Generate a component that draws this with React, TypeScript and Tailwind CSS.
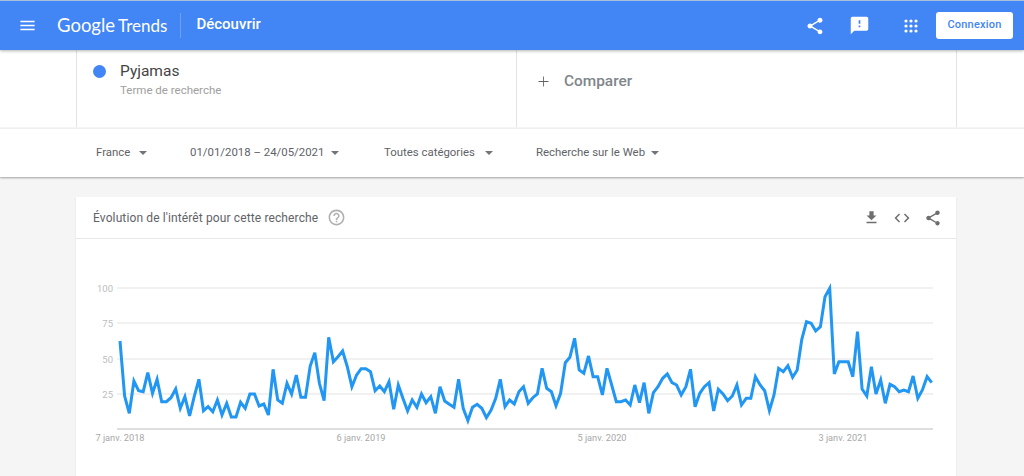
const font = { fontFamily: "Roboto, sans-serif" };

// traced weekly samples, in px*3 from the top of the plot crop
const samples = [
  213, 378, 430, 333, 362, 365, 308, 370, 328, 395, 395, 383, 357, 415, 380, 438, 380, 328, 422, 410, 425, 390,
  435, 400, 441, 441, 397, 415, 372, 372, 408, 402, 435, 298, 390, 400, 340, 372, 315,
  382, 382, 288, 248, 340, 392, 202, 275, 260, 243, 290, 350, 315, 296, 296, 305, 362, 348, 365, 335, 418, 345,
  385, 423, 390, 412, 372, 398, 380, 430, 350, 393, 403, 412, 328, 415, 452, 412, 403, 415, 443, 420, 385, 328,
  410, 390, 402, 365,
  350, 400, 383, 372, 295, 355, 365, 407, 370, 278, 262, 205, 300, 310, 258, 320, 320, 375, 295, 345, 395, 395,
  390, 405, 345, 398, 338, 430, 368, 350, 325, 312, 338, 345, 375, 350, 298, 410, 370, 350, 338, 423, 358, 372,
  392, 378, 345,
  405, 385, 385, 320, 345, 362, 422, 375, 295, 305, 287, 322, 300, 208, 155, 160, 183, 170, 80, 55, 312, 275, 275,
  275, 320, 185, 357, 378, 290, 372, 330, 400, 343, 350, 365, 360, 365, 318, 385, 360, 320, 338,
];

const step = 811.7 / (samples.length - 1);
const points = samples.map((v, i) => `${(44 + i * step).toFixed(1)},${(31 + v / 3).toFixed(1)}`).join(" ");

const yTicks = [
  { label: "100", y: 49 },
  { label: "75", y: 84 },
  { label: "50", y: 120 },
  { label: "25", y: 155 },
];

const xTicks = [
  { label: "7 janv. 2018", x: 44 },
  { label: "6 janv. 2019", x: 285 },
  { label: "5 janv. 2020", x: 526 },
  { label: "3 janv. 2021", x: 767 },
];

function Icon({ d, size, className }: { d: string; size: number; className: string }) {
  return (
    <svg width={size} height={size} viewBox="0 0 24 24" className={className} fill="currentColor">
      <path d={d} />
    </svg>
  );
}

const icons = {
  menu: "M3 18h18v-2H3v2zm0-5h18v-2H3v2zm0-7v2h18V6H3z",
  share:
    "M18 16.08c-.76 0-1.44.3-1.96.77L8.91 12.7c.05-.23.09-.46.09-.7s-.04-.47-.09-.7l7.05-4.11c.54.5 1.25.81 2.04.81 1.66 0 3-1.34 3-3s-1.34-3-3-3-3 1.34-3 3c0 .24.04.47.09.7L8.04 9.81C7.5 9.31 6.79 9 6 9c-1.66 0-3 1.34-3 3s1.34 3 3 3c.79 0 1.5-.31 2.04-.81l7.12 4.16c-.05.21-.08.43-.08.65 0 1.61 1.31 2.92 2.92 2.92 1.61 0 2.92-1.31 2.92-2.92s-1.31-2.92-2.92-2.92z",
  feedback: "M20 2H4c-1.1 0-1.99.9-1.99 2L2 22l4-4h14c1.1 0 2-.9 2-2V4c0-1.1-.9-2-2-2zm-7 12h-2v-2h2v2zm0-4h-2V6h2v4z",
  download: "M19 9h-4V3H9v6H5l7 7 7-7zM5 18v2h14v-2H5z",
  code: "M9.4 16.6L4.8 12l4.6-4.6L8 6l-6 6 6 6 1.4-1.4zm5.2 0l4.6-4.6-4.6-4.6L16 6l6 6-6 6-1.4-1.4z",
  help: "M11 18h2v-2h-2v2zm1-16C6.48 2 2 6.48 2 12s4.48 10 10 10 10-4.48 10-10S17.52 2 12 2zm0 18c-4.41 0-8-3.59-8-8s3.59-8 8-8 8 3.59 8 8-3.59 8-8 8zm0-14c-2.21 0-4 1.79-4 4h2c0-1.1.9-2 2-2s2 .9 2 2c0 2-3 1.75-3 5h2c0-2.25 3-2.5 3-5 0-2.21-1.79-4-4-4z",
  plus: "M19 12.6h-6.4V19h-1.2v-6.4H5v-1.2h6.4V5h1.2v6.4H19z",
};

// nine dots, the waffle of the Google apps button
function AppsIcon() {
  const dots = [2, 7, 12];
  return (
    <svg width="14" height="14" viewBox="0 0 14 14" className="ml-[34px] text-white" fill="currentColor">
      {dots.map((y) => dots.map((x) => <circle key={`${x}-${y}`} cx={x} cy={y} r="1.6" />))}
    </svg>
  );
}

function Filter({ label, className }: { label: string; className: string }) {
  return (
    <div className={`flex items-center justify-between text-[11.4px] text-[#5f6368] ${className}`}>
      <span>{label}</span>
      <span className="h-0 w-0 border-x-[4px] border-t-[4.5px] border-x-transparent border-t-[#70757a]" />
    </div>
  );
}

export default function App() {
  return (
    <div className="h-[476px] overflow-hidden bg-[#f5f5f5]" style={font}>
      <header className="relative z-10 flex h-[50px] items-center border-t border-[#a9bfe0] bg-[#4285f4] shadow-[0_1px_3px_rgba(0,0,0,0.3)]">
        <Icon d={icons.menu} size={19} className="ml-[18px] text-white" />
        <div className="ml-[20px] flex items-baseline text-white" style={{ fontFamily: "Lato, sans-serif" }}>
          <span className="text-[18.5px]">Google</span>
          <span className="ml-[3px] text-[17px]">Trends</span>
        </div>
        <div className="ml-[13px] h-[25px] w-px bg-[#6d9ff5]" />
        <span className="ml-[15px] pb-[2px] text-[15px] font-medium text-white">Découvrir</span>
        <Icon d={icons.share} size={20} className="ml-auto text-white" />
        <Icon d={icons.feedback} size={21} className="ml-[24px] text-white" />
        <AppsIcon />
        <button className="ml-[18px] mr-[11px] h-[27px] w-[77px] rounded-[3px] bg-white text-[11px] font-medium tracking-[0.2px] text-[#4285f4]">
          Connexion
        </button>
      </header>

      <section className="bg-white">
        <div className="ml-[76px] flex h-[77px] w-[881px] border-x border-[#e4e4e4]">
          <div className="flex w-[440px] border-r border-[#e4e4e4] pl-[16px] pt-[14px]">
            <span className="mt-[1px] h-[13px] w-[13px] rounded-full bg-[#4285f4]" />
            <div className="ml-[14px]">
              <div className="text-[15.5px] leading-[14px] text-[#444]">Pyjamas</div>
              <div className="mt-[5px] text-[11.5px] leading-[14px] text-[#a0a0a0]">Terme de recherche</div>
            </div>
          </div>
          <div className="flex items-center pb-[14px] pl-[18px]">
            <Icon d={icons.plus} size={17} className="text-[#616161]" />
            <span className="ml-[12px] text-[15.4px] font-medium text-[#80868b]">Comparer</span>
          </div>
        </div>
      </section>

      <section className="mt-[2px] flex h-[48px] items-center bg-white pl-[96px] shadow-[0_1px_2px_rgba(0,0,0,0.35)]">
        <Filter label="France" className="mr-[43px] w-[51px]" />
        <Filter label="01/01/2018 – 24/05/2021" className="mr-[45px] w-[149px]" />
        <Filter label="Toutes catégories" className="mr-[43px] w-[109px]" />
        <Filter label="Recherche sur le Web" className="w-[123px]" />
      </section>

      <section className="ml-[76px] mt-[20px] w-[880px] bg-white shadow-[0_1px_2px_rgba(0,0,0,0.08)]">
        <div className="flex h-[42px] items-center border-b border-[#e8e8e8] pl-[17px]">
          <span className="text-[12px] tracking-[0.12px] text-[#5f6368]">Évolution de l'intérêt pour cette recherche</span>
          <Icon d={icons.help} size={19} className="ml-[9px] text-[#b0b0b0]" />
          <Icon d={icons.download} size={17} className="ml-auto text-[#6e6e6e]" />
          <Icon d={icons.code} size={18} className="ml-[13px] text-[#6e6e6e]" />
          <Icon d={icons.share} size={18} className="ml-[13px] mr-[14px] text-[#6e6e6e]" />
        </div>
        <svg width="880" height="238" className="block" style={font}>
          {yTicks.map((t) => (
            <g key={t.label}>
              <line x1="41" x2="857" y1={t.y} y2={t.y} stroke="#e3e3e3" />
              <text x="37" y={t.y + 3.5} textAnchor="end" fontSize="9.5" fill="#bdbdbd">
                {t.label}
              </text>
            </g>
          ))}
          <line x1="41" x2="857" y1="190" y2="190" stroke="#bdbdbd" />
          {xTicks.map((t) => (
            <text key={t.label} x={t.x} y="202" textAnchor="middle" fontSize="9.2" fill="#a8a8a8">
              {t.label}
            </text>
          ))}
          <polyline points={points} fill="none" stroke="#2196f3" strokeWidth="3" strokeLinejoin="miter" />
        </svg>
      </section>
    </div>
  );
}
